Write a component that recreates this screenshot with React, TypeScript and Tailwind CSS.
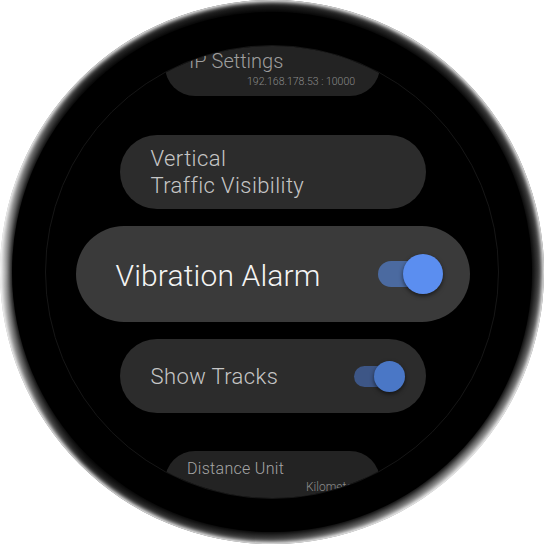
export default function App() {
  return (
    <div className="w-[544px] h-[544px] bg-white font-['Roboto',sans-serif] font-light">
      <div className="w-[544px] h-[544px] rounded-full p-[12px] bg-[conic-gradient(from_0deg,#222222_0deg,#383838_45deg,#444444_90deg,#9a9a9a_135deg,#474747_180deg,#222222_225deg,#c4c4c4_270deg,#2c2c2c_315deg,#222222_360deg)] shadow-[inset_0_0_4px_2px_#fff]">
        <div className="w-full h-full rounded-full bg-black p-[33px] shadow-[0_0_6px_3px_#000]">
          <div className="w-full h-full rounded-full overflow-hidden border border-[#161616] flex flex-col items-center pl-[1px]">
            {/* IP Settings */}
            <div className="shrink-0 mt-[-10px] w-[215px] h-[60px] rounded-[30px] bg-[#232323] pl-[24px] pt-[15px] flex flex-col">
              <div className="text-[20px] leading-[20px] text-[#9e9e9e]">IP Settings</div>
              <div className="mt-[5px] pl-[58px] text-[10.5px] leading-[12px] text-[#8a8a8a] whitespace-nowrap">192.168.178.53 : 10000</div>
            </div>
            {/* Vertical Traffic Visibility */}
            <div className="shrink-0 mt-[39px] w-[306px] h-[74px] rounded-full bg-[#2c2c2c] pl-[31px] flex items-center">
              <div className="text-[22px] leading-[27px] tracking-[0.4px] text-[#c6c6c6]">
                <div>Vertical</div>
                <div>Traffic Visibility</div>
              </div>
            </div>
            {/* Vibration Alarm */}
            <div className="shrink-0 mt-[17px] w-[394px] h-[96px] rounded-full bg-[#3a3a3a] pl-[40px] pr-[27px] flex items-center justify-between">
              <div className="text-[30px] pt-[2px] tracking-[0.15px] text-[#f4f4f4] whitespace-nowrap">Vibration Alarm</div>
              <div className="flex items-center">
                <div className="w-[50px] h-[26px] rounded-full bg-[#4b6aa0]" />
                <div className="ml-[-25px] w-[40px] h-[40px] rounded-full bg-[#5b8ef0] shadow-[0_2px_4px_rgba(0,0,0,0.55)]" />
              </div>
            </div>
            {/* Show Tracks */}
            <div className="shrink-0 mt-[17px] w-[306px] h-[74px] rounded-full bg-[#2c2c2c] pl-[31px] pr-[21px] flex items-center justify-between">
              <div className="text-[22px] tracking-[0.4px] text-[#c6c6c6] whitespace-nowrap">Show Tracks</div>
              <div className="flex items-center">
                <div className="w-[41px] h-[21px] rounded-full bg-[#3d5686]" />
                <div className="ml-[-21px] w-[31px] h-[31px] rounded-full bg-[#4a77c6] shadow-[0_2px_4px_rgba(0,0,0,0.55)]" />
              </div>
            </div>
            {/* Distance Unit */}
            <div className="shrink-0 mt-[38px] w-[215px] h-[60px] rounded-[30px] bg-[#232323] pl-[22px] pt-[8px] flex flex-col">
              <div className="text-[16px] leading-[20px] tracking-[0.3px] text-[#a6a6a6]">Distance Unit</div>
              <div className="mt-[1px] pl-[119px] text-[12px] leading-[14px] text-[#8c8c8c] whitespace-nowrap">Kilometers</div>
            </div>
          </div>
        </div>
      </div>
    </div>
  );
}
